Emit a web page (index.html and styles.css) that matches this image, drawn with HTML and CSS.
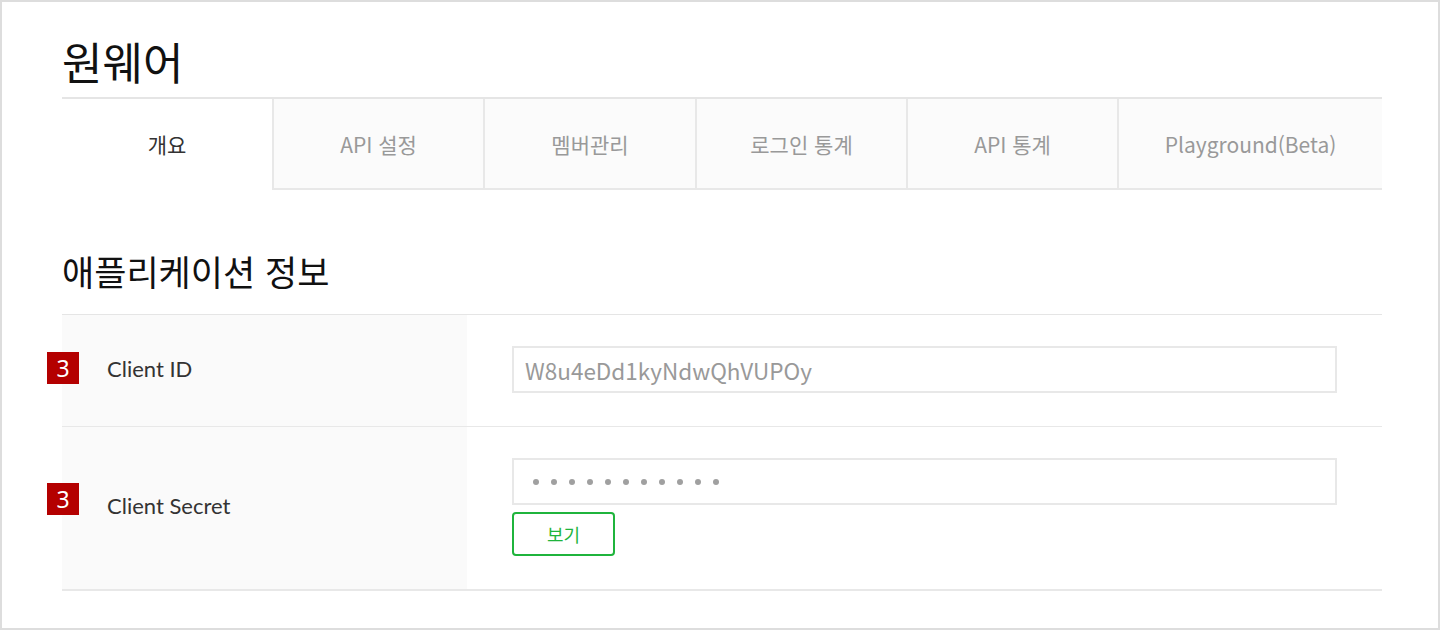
FILE: index.html
```html
<!DOCTYPE html>
<html lang="ko">
<head>
    <meta charset="UTF-8">
    <meta name="viewport" content="width=device-width, initial-scale=1.0">
    <title>원웨어 - 개요</title>
    <link rel="stylesheet" href="styles.css">
</head>
<body>

    <div class="frame">
        <h1 class="app-title">원웨어</h1>

        <ul class="tabs">
            <li class="tab tab-active">개요</li>
            <li class="tab">API 설정</li>
            <li class="tab">멤버관리</li>
            <li class="tab">로그인 통계</li>
            <li class="tab">API 통계</li>
            <li class="tab">Playground(Beta)</li>
        </ul>

        <h2 class="section-title">애플리케이션 정보</h2>

        <div class="info-table">
            <div class="info-row">
                <div class="info-label">
                    <span class="badge">3</span>
                    Client ID
                </div>
                <div class="info-value">
                    <div class="field">W8u4eDd1kyNdwQhVUPOy</div>
                </div>
            </div>
            <div class="info-row">
                <div class="info-label">
                    <span class="badge">3</span>
                    Client Secret
                </div>
                <div class="info-value">
                    <div class="field field-secret">
                        <span class="dot"></span><span class="dot"></span><span class="dot"></span>
                        <span class="dot"></span><span class="dot"></span><span class="dot"></span>
                        <span class="dot"></span><span class="dot"></span><span class="dot"></span>
                        <span class="dot"></span><span class="dot"></span>
                    </div>
                    <button class="btn-show">보기</button>
                </div>
            </div>
        </div>
    </div>

</body>
</html>
```

FILE: styles.css
```css
body {
    margin: 0;
    padding: 0;
    background-color: #fff;
    font-family: "Noto Sans CJK KR", "Noto Sans", sans-serif;
    color: #333;
}

.frame {
    box-sizing: border-box;
    height: 630px;
    border: 2px solid #ddd;
    padding: 33px 56px 0 60px;
}

.app-title {
    margin: 0 0 10px;
    font-size: 44px;
    line-height: 52px;
    font-weight: 400;
    color: #111;
}

/* Tabs */
.tabs {
    display: grid;
    grid-template-columns: 210px 211px 212px 211px 211px 1fr;
    margin: 0;
    padding: 0;
    list-style: none;
    border-top: 2px solid #e5e5e5;
}

.tab {
    height: 91px;
    display: flex;
    align-items: center;
    justify-content: center;
    background-color: #fbfbfb;
    border-left: 2px solid #e8e8e8;
    border-bottom: 2px solid #e8e8e8;
    box-sizing: border-box;
    font-size: 21px;
    color: #999;
}

.tab-active {
    background-color: #fff;
    border-left: none;
    border-bottom-color: #fff;
    color: #333;
}

.section-title {
    margin: 57px 0 19px;
    font-size: 35px;
    line-height: 48px;
    font-weight: 400;
    color: #111;
}

/* Info table */
.info-table {
    border-top: 1px solid #e5e5e5;
}

.info-row {
    display: flex;
    border-bottom: 2px solid #e8e8e8;
}

.info-row:first-child {
    border-bottom-width: 1px;
}

.info-label {
    position: relative;
    width: 405px;
    flex-shrink: 0;
    box-sizing: border-box;
    padding: 0 0 5px 45px;
    display: flex;
    align-items: center;
    background-color: #fafafa;
    font-family: Lato, "Noto Sans", sans-serif;
    font-size: 22px;
    color: #333;
}

.badge {
    position: absolute;
    left: -15px;
    top: 50%;
    margin-top: -19px;
    width: 32px;
    height: 32px;
    line-height: 32px;
    text-align: center;
    background-color: #b40000;
    color: #fff;
    font-family: "Noto Sans", sans-serif;
    font-size: 23px;
}

.info-row:last-child .badge {
    margin-top: -25px;
}

.info-value {
    flex: 1;
    padding: 31px 45px 33px;
}

.field {
    box-sizing: border-box;
    height: 47px;
    border: 2px solid #e8e8e8;
    padding: 0 11px;
    display: flex;
    align-items: center;
    font-size: 22.5px;
    color: #999;
}

.field-secret {
    gap: 12px;
    padding-left: 19px;
}

.dot {
    width: 6px;
    height: 6px;
    border-radius: 50%;
    background-color: #a0a0a0;
}

.btn-show {
    display: block;
    margin-top: 7px;
    width: 103px;
    height: 44px;
    background-color: #fff;
    border: 2px solid #1fb43c;
    border-radius: 4px;
    font-family: "Noto Sans CJK KR", sans-serif;
    font-size: 18px;
    color: #1fb43c;
    cursor: pointer;
}
```
